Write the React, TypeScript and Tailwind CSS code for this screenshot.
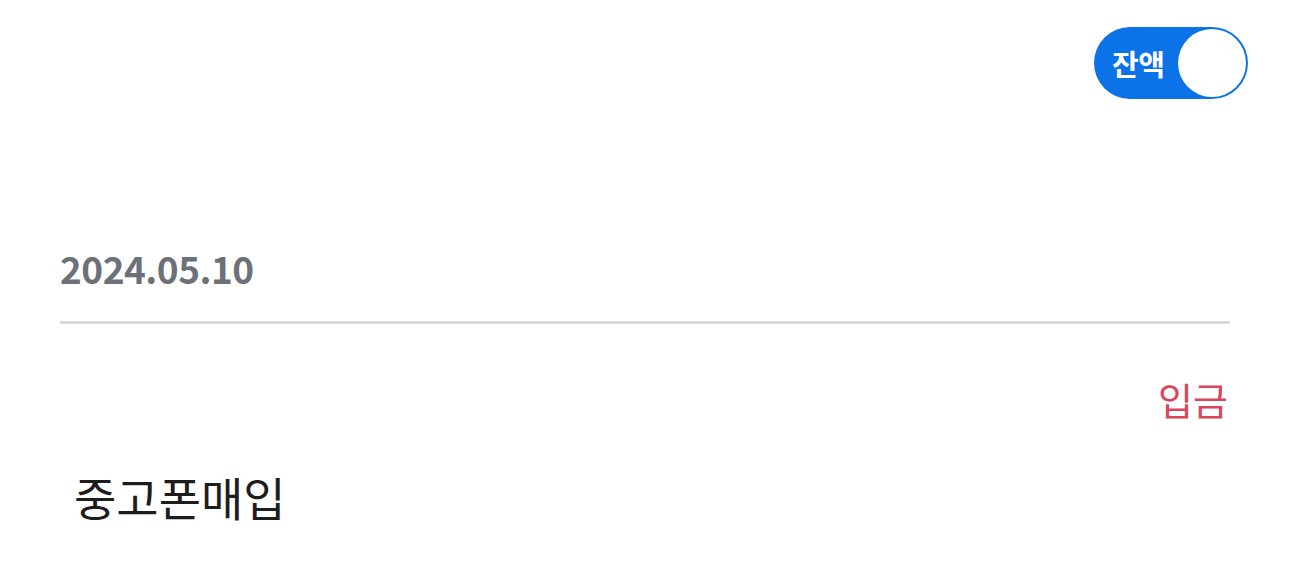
import React, { useState } from 'react';

const FONT = { fontFamily: '"Noto Sans CJK KR", "Noto Sans", sans-serif' };

export default function App() {
  const [showBalance, setShowBalance] = useState(true);

  return (
    <div className="w-[1290px] h-[579px] bg-white overflow-hidden" style={FONT}>
      {/* Balance toggle */}
      <div className="flex justify-end pt-[27px] pr-[42px]">
        <button
          onClick={() => setShowBalance(v => !v)}
          className="flex items-center w-[154px] h-[72px] rounded-full bg-[#0b72e7] pl-[18px] pr-[2px]"
        >
          <span className="text-white text-[29px] font-bold leading-none tracking-[-0.5px]">잔액</span>
          <span className="ml-auto w-[68px] h-[68px] rounded-full bg-white" />
        </button>
      </div>

      <div className="px-[60px]">
        {/* Date header */}
        <div className="mt-[151px] text-[37px] font-bold leading-none text-[#6b7079] tracking-[-0.5px]">2024.05.10</div>
        <div className="mt-[34px] h-[3px] bg-[#dadada]" />

        {/* Transaction */}
        <div className="flex justify-end pr-[2px] mt-[56px]">
          <span className="text-[38px] leading-none text-[#d8475a]">입금</span>
        </div>
        <div className="pl-[14px] mt-[55px] text-[46px] leading-none text-[#1d1d1d]">중고폰매입</div>
      </div>
    </div>
  );
}
